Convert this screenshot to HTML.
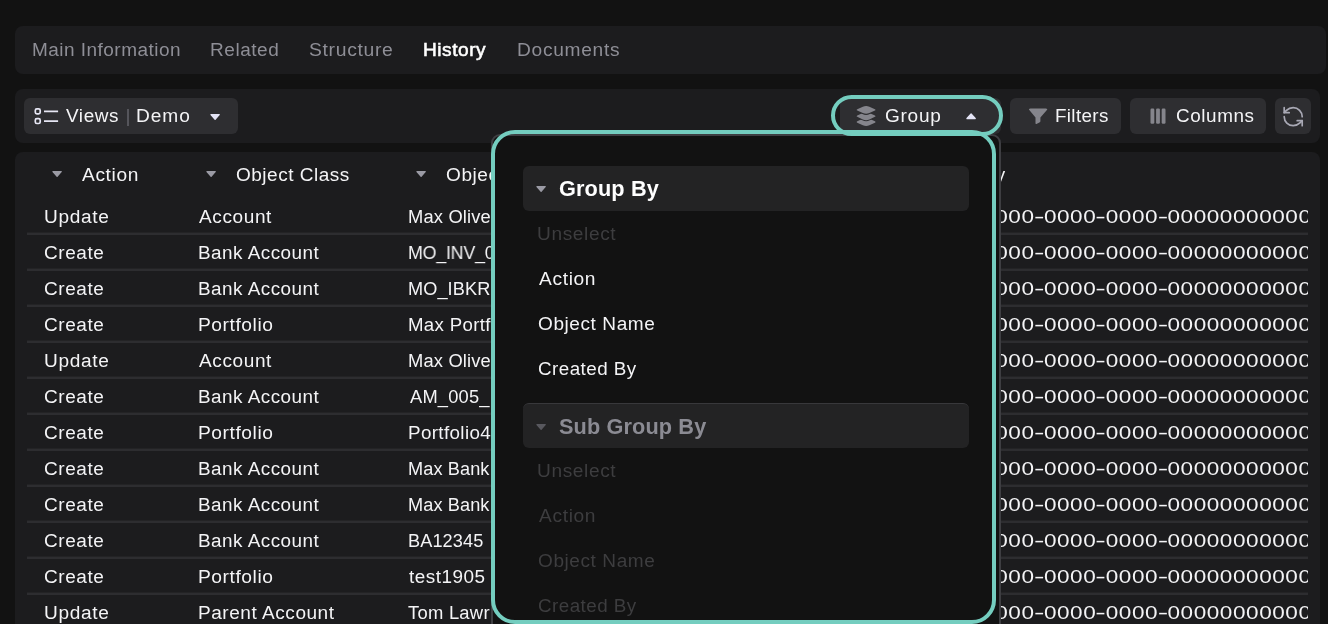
<!DOCTYPE html>
<html lang="en">
<head>
<meta charset="utf-8">
<title>History</title>
<style>
*{box-sizing:border-box;margin:0;padding:0}
html,body{width:1328px;height:624px;overflow:hidden;background:#121212}
body{position:relative;font-family:"Liberation Sans",sans-serif;font-size:18px;color:#f4f4f6}
button{border:0;font:inherit;color:inherit;text-align:left;cursor:pointer;overflow:visible}
a{color:inherit;text-decoration:none;cursor:pointer}
.abs{position:absolute}
.panel{position:absolute;background:#1c1c1e;border-radius:8px}
.btn{position:absolute;background:#2e2e31;border-radius:6px;height:36px;top:9px}
.t{will-change:transform;position:absolute;display:block;white-space:nowrap;line-height:20px;height:20px;transform-origin:0 0}
.clip{position:absolute;left:12px;top:0;width:1281px;height:472px;overflow:hidden}
.tr{position:absolute;left:0;width:1281px;height:36px}
.tr i{position:absolute;left:0;top:34px;width:1281px;height:2px;background:#2d2d30;box-shadow:0 -1px 0 #232325}
.menu{position:absolute;left:491px;top:134px;width:510.2px;height:500px;background:#121212;border:2px solid #3e3e42;border-radius:9px}
.hd{position:absolute;left:30px;width:446px;height:44.5px;background:#232324;border-radius:6px}
.hl{position:absolute;border:4px solid #74cdbf;border-radius:24px;pointer-events:none}
svg{position:absolute;overflow:visible}
</style>
</head>
<body>

<nav class="panel" style="left:15px;top:26px;width:1311px;height:48px">
<a class="t" role="tab" style="left:16.62px;top:14.00px;transform:scaleX(1.0544);letter-spacing:0.452px;color:#8e8e96;">Main Information</a>
<a class="t" role="tab" style="left:195.42px;top:14.00px;transform:scaleX(1.0555);letter-spacing:0.521px;color:#8e8e96;">Related</a>
<a class="t" role="tab" style="left:293.99px;top:14.00px;transform:scaleX(1.0745);letter-spacing:0.619px;color:#8e8e96;">Structure</a>
<a class="t" role="tab" style="left:408.11px;top:14.00px;transform:scaleX(1.0601);letter-spacing:0.515px;color:#ffffff;-webkit-text-stroke:0.55px #ffffff;">History</a>
<a class="t" role="tab" style="left:502.30px;top:14.00px;transform:scaleX(1.0640);letter-spacing:0.670px;color:#8e8e96;">Documents</a>
</nav>
<section class="panel" style="left:15px;top:89px;width:1305px;height:54px">
<button class="btn" style="left:9px;width:214px">
<svg style="left:10.00px;top:9.00px" width="26" height="19" viewBox="34 107 26 19"><g fill="none" stroke="#e6e6f4" stroke-width="1.7"><rect x="35.3" y="108.9" width="4.9" height="4.9" rx="1.6"/><rect x="35.3" y="118.6" width="4.9" height="4.9" rx="1.6"/><path d="M44 111.4H58.1M44 121.15H58.1"/></g></svg>
<span class="t" style="left:42.20px;top:8.00px;transform:scaleX(1.0505);letter-spacing:0.565px;color:#f4f4f6;">Views</span>
<i class="abs" style="left:103.3px;top:10.5px;width:1.3px;height:17.5px;background:#55555b"></i>
<span class="t" style="left:112.21px;top:8.00px;transform:scaleX(1.0628);letter-spacing:0.902px;color:#f4f4f6;">Demo</span>
<svg style="left:186.00px;top:16.00px" width="10.2" height="6.2" viewBox="0 0 10.2 6.2"><polygon points="0.95,0.65 9.25,0.65 5.10,5.25" fill="#e4e4f6" stroke="#e4e4f6" stroke-width="1.3" stroke-linejoin="round"/></svg>
</button>
<button class="btn" style="left:825px;width:161px">
<svg style="left:14.00px;top:6.00px" width="24" height="24" viewBox="854 104 24 24"><path d="M857.26 122.66Q855.80 122.00 857.26 121.34L862.82 118.79Q866.10 117.30 869.38 118.79L874.94 121.34Q876.40 122.00 874.94 122.66L869.38 125.21Q866.10 126.70 862.82 125.21Z" fill="#85858c"/><path d="M857.26 116.86Q855.80 116.20 857.26 115.54L862.82 112.99Q866.10 111.50 869.38 112.99L874.94 115.54Q876.40 116.20 874.94 116.86L869.38 119.41Q866.10 120.90 862.82 119.41Z" fill="#2e2e31" stroke="#2e2e31" stroke-width="2.1" stroke-linejoin="round"/><path d="M857.26 116.86Q855.80 116.20 857.26 115.54L862.82 112.99Q866.10 111.50 869.38 112.99L874.94 115.54Q876.40 116.20 874.94 116.86L869.38 119.41Q866.10 120.90 862.82 119.41Z" fill="#85858c"/><path d="M857.26 110.56Q855.80 109.90 857.26 109.24L862.82 106.69Q866.10 105.20 869.38 106.69L874.94 109.24Q876.40 109.90 874.94 110.56L869.38 113.11Q866.10 114.60 862.82 113.11Z" fill="#2e2e31" stroke="#2e2e31" stroke-width="2.1" stroke-linejoin="round"/><path d="M857.26 110.56Q855.80 109.90 857.26 109.24L862.82 106.69Q866.10 105.20 869.38 106.69L874.94 109.24Q876.40 109.90 874.94 110.56L869.38 113.11Q866.10 114.60 862.82 113.11Z" fill="#85858c"/></svg>
<span class="t" style="left:44.96px;top:8.00px;transform:scaleX(1.0588);letter-spacing:0.673px;color:#f4f4f6;">Group</span>
<svg style="left:125.80px;top:15.30px" width="10.2" height="6.2" viewBox="0 0 10.2 6.2"><polygon points="0.95,5.55 9.25,5.55 5.10,0.95" fill="#e4e4f6" stroke="#e4e4f6" stroke-width="1.3" stroke-linejoin="round"/></svg>
</button>
<button class="btn" style="left:995px;width:111px">
<svg style="left:17.00px;top:9.00px" width="22" height="18" viewBox="1027 107 22 18"><path fill="#85858c" d="M1030.4 108.4H1045.8Q1048.2 108.4 1046.7 110.3L1040.4 117.5V121.3Q1040.4 122 1039.8 122.3L1036.5 123.9Q1035.5 124.3 1035.5 123.3V117.5L1029.5 110.3Q1028 108.4 1030.4 108.4Z"/></svg>
<span class="t" style="left:45.43px;top:8.00px;transform:scaleX(1.0447);letter-spacing:0.335px;color:#f4f4f6;">Filters</span>
</button>
<button class="btn" style="left:1115px;width:136px">
<svg style="left:19.00px;top:9.00px" width="18" height="18" viewBox="1149 107 18 18"><g fill="#85858c"><rect x="1150.5" y="108.5" width="3.8" height="15.3" rx="1.2"/><rect x="1156.1" y="108.5" width="3.8" height="15.3" rx="1.2"/><rect x="1161.7" y="108.5" width="3.8" height="15.3" rx="1.2"/></g></svg>
<span class="t" style="left:45.71px;top:8.00px;transform:scaleX(1.0498);letter-spacing:0.552px;color:#f4f4f6;">Columns</span>
</button>
<button class="btn" title="Refresh" style="left:1260px;width:36px">
<svg style="left:6.00px;top:6.00px" width="26" height="26" viewBox="1281 104 26 26"><g transform="translate(1281.2 104.7)" fill="none" stroke="#a9a9b5" stroke-width="1.7" stroke-linecap="round" stroke-linejoin="round"><path d="M21 12a9 9 0 0 0-9-9 9.75 9.75 0 0 0-6.74 2.74L3 8"/><path d="M3 3v5h5"/><path d="M3 12a9 9 0 0 0 9 9 9.75 9.75 0 0 0 6.740-2.740L21 16"/><path d="M16 16h5v5"/></g></svg>
</button>
</section>
<section class="panel" role="table" style="left:15px;top:152px;width:1305px;height:480px">
<div class="clip">
<div class="tr" role="row" style="top:0;height:47px">
<svg style="left:25.00px;top:19.00px" width="10.2" height="6.2" viewBox="0 0 10.2 6.2"><polygon points="0.95,0.65 9.25,0.65 5.10,5.25" fill="#9a9aa4" stroke="#9a9aa4" stroke-width="1.3" stroke-linejoin="round"/></svg>
<span class="t" role="columnheader" style="left:54.50px;top:13.00px;transform:scaleX(1.0638);letter-spacing:0.588px;color:#f4f4f6;">Action</span>
<svg style="left:179.00px;top:19.00px" width="10.2" height="6.2" viewBox="0 0 10.2 6.2"><polygon points="0.95,0.65 9.25,0.65 5.10,5.25" fill="#9a9aa4" stroke="#9a9aa4" stroke-width="1.3" stroke-linejoin="round"/></svg>
<span class="t" role="columnheader" style="left:208.96px;top:13.00px;transform:scaleX(1.0556);letter-spacing:0.482px;color:#f4f4f6;">Object Class</span>
<svg style="left:389.00px;top:19.00px" width="10.2" height="6.2" viewBox="0 0 10.2 6.2"><polygon points="0.95,0.65 9.25,0.65 5.10,5.25" fill="#9a9aa4" stroke="#9a9aa4" stroke-width="1.3" stroke-linejoin="round"/></svg>
<span class="t" role="columnheader" style="left:418.96px;top:13.00px;transform:scaleX(1.0565);letter-spacing:0.554px;color:#f4f4f6;">Object Name</span>
<svg style="left:850.00px;top:19.00px" width="10.2" height="6.2" viewBox="0 0 10.2 6.2"><polygon points="0.95,0.65 9.25,0.65 5.10,5.25" fill="#9a9aa4" stroke="#9a9aa4" stroke-width="1.3" stroke-linejoin="round"/></svg>
<span class="t" role="columnheader" style="left:879.57px;top:13.00px;transform:scaleX(1.0454);letter-spacing:0.430px;color:#f4f4f6;">Created By</span>
</div>
<div class="tr" role="row" style="top:47px">
<span class="t" role="cell" style="left:16.68px;top:8.00px;transform:scaleX(1.0598);letter-spacing:0.632px;color:#f4f4f6;">Update</span>
<span class="t" role="cell" style="left:172.25px;top:8.00px;transform:scaleX(1.0565);letter-spacing:0.580px;color:#f4f4f6;">Account</span>
<span class="t" role="cell" style="left:381.27px;top:8.00px;transform:scaleX(1.0177);letter-spacing:0.169px;color:#f4f4f6;">Max Olive<span style="margin-left:3px">r</span></span>
<span class="t" role="cell" style="left:840.66px;top:8.00px;transform:scaleX(1.25);letter-spacing:0.47px">00000000<b style="display:inline-block;font-weight:normal;letter-spacing:0;transform:scaleX(1.4);margin:0 0.74px">-</b>0000<b style="display:inline-block;font-weight:normal;letter-spacing:0;transform:scaleX(1.4);margin:0 0.74px">-</b>0000<b style="display:inline-block;font-weight:normal;letter-spacing:0;transform:scaleX(1.4);margin:0 0.74px">-</b>0000<b style="display:inline-block;font-weight:normal;letter-spacing:0;transform:scaleX(1.4);margin:0 0.74px">-</b>000000000000</span>
<i></i></div>
<div class="tr" role="row" style="top:83px">
<span class="t" role="cell" style="left:16.96px;top:8.00px;transform:scaleX(1.0543);letter-spacing:0.541px;color:#f4f4f6;">Create</span>
<span class="t" role="cell" style="left:170.88px;top:8.00px;transform:scaleX(1.0489);letter-spacing:0.464px;color:#f4f4f6;">Bank Account</span>
<span class="t" role="cell" style="left:381.32px;top:8.00px;transform:scaleX(0.9868);letter-spacing:-0.173px;color:#f4f4f6;">MO_INV_001</span>
<span class="t" role="cell" style="left:840.66px;top:8.00px;transform:scaleX(1.25);letter-spacing:0.47px">00000000<b style="display:inline-block;font-weight:normal;letter-spacing:0;transform:scaleX(1.4);margin:0 0.74px">-</b>0000<b style="display:inline-block;font-weight:normal;letter-spacing:0;transform:scaleX(1.4);margin:0 0.74px">-</b>0000<b style="display:inline-block;font-weight:normal;letter-spacing:0;transform:scaleX(1.4);margin:0 0.74px">-</b>0000<b style="display:inline-block;font-weight:normal;letter-spacing:0;transform:scaleX(1.4);margin:0 0.74px">-</b>000000000000</span>
<i></i></div>
<div class="tr" role="row" style="top:119px">
<span class="t" role="cell" style="left:16.96px;top:8.00px;transform:scaleX(1.0543);letter-spacing:0.541px;color:#f4f4f6;">Create</span>
<span class="t" role="cell" style="left:170.88px;top:8.00px;transform:scaleX(1.0489);letter-spacing:0.464px;color:#f4f4f6;">Bank Account</span>
<span class="t" role="cell" style="left:381.29px;top:8.00px;transform:scaleX(1.0076);letter-spacing:0.099px;color:#f4f4f6;">MO_IBKR<span style="margin-left:3px">_01</span></span>
<span class="t" role="cell" style="left:840.66px;top:8.00px;transform:scaleX(1.25);letter-spacing:0.47px">00000000<b style="display:inline-block;font-weight:normal;letter-spacing:0;transform:scaleX(1.4);margin:0 0.74px">-</b>0000<b style="display:inline-block;font-weight:normal;letter-spacing:0;transform:scaleX(1.4);margin:0 0.74px">-</b>0000<b style="display:inline-block;font-weight:normal;letter-spacing:0;transform:scaleX(1.4);margin:0 0.74px">-</b>0000<b style="display:inline-block;font-weight:normal;letter-spacing:0;transform:scaleX(1.4);margin:0 0.74px">-</b>000000000000</span>
<i></i></div>
<div class="tr" role="row" style="top:155px">
<span class="t" role="cell" style="left:16.96px;top:8.00px;transform:scaleX(1.0543);letter-spacing:0.541px;color:#f4f4f6;">Create</span>
<span class="t" role="cell" style="left:170.65px;top:8.00px;transform:scaleX(1.0682);letter-spacing:0.509px;color:#f4f4f6;">Portfolio</span>
<span class="t" role="cell" style="left:381.25px;top:8.00px;transform:scaleX(1.0358);letter-spacing:0.326px;color:#f4f4f6;">Max Portf<span style="margin-left:3px">olio</span></span>
<span class="t" role="cell" style="left:840.66px;top:8.00px;transform:scaleX(1.25);letter-spacing:0.47px">00000000<b style="display:inline-block;font-weight:normal;letter-spacing:0;transform:scaleX(1.4);margin:0 0.74px">-</b>0000<b style="display:inline-block;font-weight:normal;letter-spacing:0;transform:scaleX(1.4);margin:0 0.74px">-</b>0000<b style="display:inline-block;font-weight:normal;letter-spacing:0;transform:scaleX(1.4);margin:0 0.74px">-</b>0000<b style="display:inline-block;font-weight:normal;letter-spacing:0;transform:scaleX(1.4);margin:0 0.74px">-</b>000000000000</span>
<i></i></div>
<div class="tr" role="row" style="top:191px">
<span class="t" role="cell" style="left:16.68px;top:8.00px;transform:scaleX(1.0598);letter-spacing:0.632px;color:#f4f4f6;">Update</span>
<span class="t" role="cell" style="left:172.25px;top:8.00px;transform:scaleX(1.0565);letter-spacing:0.580px;color:#f4f4f6;">Account</span>
<span class="t" role="cell" style="left:381.27px;top:8.00px;transform:scaleX(1.0177);letter-spacing:0.169px;color:#f4f4f6;">Max Olive<span style="margin-left:3px">r</span></span>
<span class="t" role="cell" style="left:840.66px;top:8.00px;transform:scaleX(1.25);letter-spacing:0.47px">00000000<b style="display:inline-block;font-weight:normal;letter-spacing:0;transform:scaleX(1.4);margin:0 0.74px">-</b>0000<b style="display:inline-block;font-weight:normal;letter-spacing:0;transform:scaleX(1.4);margin:0 0.74px">-</b>0000<b style="display:inline-block;font-weight:normal;letter-spacing:0;transform:scaleX(1.4);margin:0 0.74px">-</b>0000<b style="display:inline-block;font-weight:normal;letter-spacing:0;transform:scaleX(1.4);margin:0 0.74px">-</b>000000000000</span>
<i></i></div>
<div class="tr" role="row" style="top:227px">
<span class="t" role="cell" style="left:16.96px;top:8.00px;transform:scaleX(1.0543);letter-spacing:0.541px;color:#f4f4f6;">Create</span>
<span class="t" role="cell" style="left:170.88px;top:8.00px;transform:scaleX(1.0489);letter-spacing:0.464px;color:#f4f4f6;">Bank Account</span>
<span class="t" role="cell" style="left:382.80px;top:8.00px;transform:scaleX(1.0159);letter-spacing:0.201px;color:#f4f4f6;">AM_005_<span style="margin-left:3px">01</span></span>
<span class="t" role="cell" style="left:840.66px;top:8.00px;transform:scaleX(1.25);letter-spacing:0.47px">00000000<b style="display:inline-block;font-weight:normal;letter-spacing:0;transform:scaleX(1.4);margin:0 0.74px">-</b>0000<b style="display:inline-block;font-weight:normal;letter-spacing:0;transform:scaleX(1.4);margin:0 0.74px">-</b>0000<b style="display:inline-block;font-weight:normal;letter-spacing:0;transform:scaleX(1.4);margin:0 0.74px">-</b>0000<b style="display:inline-block;font-weight:normal;letter-spacing:0;transform:scaleX(1.4);margin:0 0.74px">-</b>000000000000</span>
<i></i></div>
<div class="tr" role="row" style="top:263px">
<span class="t" role="cell" style="left:16.96px;top:8.00px;transform:scaleX(1.0543);letter-spacing:0.541px;color:#f4f4f6;">Create</span>
<span class="t" role="cell" style="left:170.65px;top:8.00px;transform:scaleX(1.0682);letter-spacing:0.509px;color:#f4f4f6;">Portfolio</span>
<span class="t" role="cell" style="left:381.23px;top:8.00px;transform:scaleX(1.0446);letter-spacing:0.351px;color:#f4f4f6;">Portfolio4</span>
<span class="t" role="cell" style="left:840.66px;top:8.00px;transform:scaleX(1.25);letter-spacing:0.47px">00000000<b style="display:inline-block;font-weight:normal;letter-spacing:0;transform:scaleX(1.4);margin:0 0.74px">-</b>0000<b style="display:inline-block;font-weight:normal;letter-spacing:0;transform:scaleX(1.4);margin:0 0.74px">-</b>0000<b style="display:inline-block;font-weight:normal;letter-spacing:0;transform:scaleX(1.4);margin:0 0.74px">-</b>0000<b style="display:inline-block;font-weight:normal;letter-spacing:0;transform:scaleX(1.4);margin:0 0.74px">-</b>000000000000</span>
<i></i></div>
<div class="tr" role="row" style="top:299px">
<span class="t" role="cell" style="left:16.96px;top:8.00px;transform:scaleX(1.0543);letter-spacing:0.541px;color:#f4f4f6;">Create</span>
<span class="t" role="cell" style="left:170.88px;top:8.00px;transform:scaleX(1.0489);letter-spacing:0.464px;color:#f4f4f6;">Bank Account</span>
<span class="t" role="cell" style="left:381.29px;top:8.00px;transform:scaleX(1.0089);letter-spacing:0.099px;color:#f4f4f6;">Max Bank<span style="margin-left:3px"> 1</span></span>
<span class="t" role="cell" style="left:840.66px;top:8.00px;transform:scaleX(1.25);letter-spacing:0.47px">00000000<b style="display:inline-block;font-weight:normal;letter-spacing:0;transform:scaleX(1.4);margin:0 0.74px">-</b>0000<b style="display:inline-block;font-weight:normal;letter-spacing:0;transform:scaleX(1.4);margin:0 0.74px">-</b>0000<b style="display:inline-block;font-weight:normal;letter-spacing:0;transform:scaleX(1.4);margin:0 0.74px">-</b>0000<b style="display:inline-block;font-weight:normal;letter-spacing:0;transform:scaleX(1.4);margin:0 0.74px">-</b>000000000000</span>
<i></i></div>
<div class="tr" role="row" style="top:335px">
<span class="t" role="cell" style="left:16.96px;top:8.00px;transform:scaleX(1.0543);letter-spacing:0.541px;color:#f4f4f6;">Create</span>
<span class="t" role="cell" style="left:170.88px;top:8.00px;transform:scaleX(1.0489);letter-spacing:0.464px;color:#f4f4f6;">Bank Account</span>
<span class="t" role="cell" style="left:381.29px;top:8.00px;transform:scaleX(1.0089);letter-spacing:0.099px;color:#f4f4f6;">Max Bank<span style="margin-left:3px"> 2</span></span>
<span class="t" role="cell" style="left:840.66px;top:8.00px;transform:scaleX(1.25);letter-spacing:0.47px">00000000<b style="display:inline-block;font-weight:normal;letter-spacing:0;transform:scaleX(1.4);margin:0 0.74px">-</b>0000<b style="display:inline-block;font-weight:normal;letter-spacing:0;transform:scaleX(1.4);margin:0 0.74px">-</b>0000<b style="display:inline-block;font-weight:normal;letter-spacing:0;transform:scaleX(1.4);margin:0 0.74px">-</b>0000<b style="display:inline-block;font-weight:normal;letter-spacing:0;transform:scaleX(1.4);margin:0 0.74px">-</b>000000000000</span>
<i></i></div>
<div class="tr" role="row" style="top:371px">
<span class="t" role="cell" style="left:16.96px;top:8.00px;transform:scaleX(1.0543);letter-spacing:0.541px;color:#f4f4f6;">Create</span>
<span class="t" role="cell" style="left:170.88px;top:8.00px;transform:scaleX(1.0489);letter-spacing:0.464px;color:#f4f4f6;">Bank Account</span>
<span class="t" role="cell" style="left:381.24px;top:8.00px;transform:scaleX(1.0084);letter-spacing:0.099px;color:#f4f4f6;">BA12345</span>
<span class="t" role="cell" style="left:840.66px;top:8.00px;transform:scaleX(1.25);letter-spacing:0.47px">00000000<b style="display:inline-block;font-weight:normal;letter-spacing:0;transform:scaleX(1.4);margin:0 0.74px">-</b>0000<b style="display:inline-block;font-weight:normal;letter-spacing:0;transform:scaleX(1.4);margin:0 0.74px">-</b>0000<b style="display:inline-block;font-weight:normal;letter-spacing:0;transform:scaleX(1.4);margin:0 0.74px">-</b>0000<b style="display:inline-block;font-weight:normal;letter-spacing:0;transform:scaleX(1.4);margin:0 0.74px">-</b>000000000000</span>
<i></i></div>
<div class="tr" role="row" style="top:407px">
<span class="t" role="cell" style="left:16.96px;top:8.00px;transform:scaleX(1.0543);letter-spacing:0.541px;color:#f4f4f6;">Create</span>
<span class="t" role="cell" style="left:170.65px;top:8.00px;transform:scaleX(1.0682);letter-spacing:0.509px;color:#f4f4f6;">Portfolio</span>
<span class="t" role="cell" style="left:382.49px;top:8.00px;transform:scaleX(1.0511);letter-spacing:0.472px;color:#f4f4f6;">test1905</span>
<span class="t" role="cell" style="left:840.66px;top:8.00px;transform:scaleX(1.25);letter-spacing:0.47px">00000000<b style="display:inline-block;font-weight:normal;letter-spacing:0;transform:scaleX(1.4);margin:0 0.74px">-</b>0000<b style="display:inline-block;font-weight:normal;letter-spacing:0;transform:scaleX(1.4);margin:0 0.74px">-</b>0000<b style="display:inline-block;font-weight:normal;letter-spacing:0;transform:scaleX(1.4);margin:0 0.74px">-</b>0000<b style="display:inline-block;font-weight:normal;letter-spacing:0;transform:scaleX(1.4);margin:0 0.74px">-</b>000000000000</span>
<i></i></div>
<div class="tr" role="row" style="top:443px">
<span class="t" role="cell" style="left:16.68px;top:8.00px;transform:scaleX(1.0598);letter-spacing:0.632px;color:#f4f4f6;">Update</span>
<span class="t" role="cell" style="left:170.86px;top:8.00px;transform:scaleX(1.0572);letter-spacing:0.506px;color:#f4f4f6;">Parent Account</span>
<span class="t" role="cell" style="left:381.44px;top:8.00px;transform:scaleX(1.0226);letter-spacing:0.244px;color:#f4f4f6;">Tom Lawr<span style="margin-left:3px">ence</span></span>
<span class="t" role="cell" style="left:840.66px;top:8.00px;transform:scaleX(1.25);letter-spacing:0.47px">00000000<b style="display:inline-block;font-weight:normal;letter-spacing:0;transform:scaleX(1.4);margin:0 0.74px">-</b>0000<b style="display:inline-block;font-weight:normal;letter-spacing:0;transform:scaleX(1.4);margin:0 0.74px">-</b>0000<b style="display:inline-block;font-weight:normal;letter-spacing:0;transform:scaleX(1.4);margin:0 0.74px">-</b>0000<b style="display:inline-block;font-weight:normal;letter-spacing:0;transform:scaleX(1.4);margin:0 0.74px">-</b>000000000000</span>
<i></i></div>
</div>
</section>
<div class="menu" role="menu">
<div class="hd" style="top:30.2px"></div>
<svg style="left:43.00px;top:50.00px" width="10.2" height="6.2" viewBox="0 0 10.2 6.2"><polygon points="0.95,0.65 9.25,0.65 5.10,5.25" fill="#9a9aa4" stroke="#9a9aa4" stroke-width="1.3" stroke-linejoin="round"/></svg>
<div class="t" style="left:66.49px;top:40.75px;transform:scaleX(1.0095);letter-spacing:0.131px;color:#ffffff;font-size:21.5px;line-height:24px;height:24px;font-weight:bold;">Group By</div>
<div class="t" role="menuitem" style="left:44.37px;top:88.00px;transform:scaleX(1.0618);letter-spacing:0.572px;color:#3d3d3f;">Unselect</div>
<div class="t" role="menuitem" style="left:45.75px;top:133.00px;transform:scaleX(1.0658);letter-spacing:0.605px;color:#f4f4f6;">Action</div>
<div class="t" role="menuitem" style="left:45.46px;top:178.00px;transform:scaleX(1.0565);letter-spacing:0.554px;color:#f4f4f6;">Object Name</div>
<div class="t" role="menuitem" style="left:45.47px;top:223.00px;transform:scaleX(1.0454);letter-spacing:0.430px;color:#f4f4f6;">Created By</div>
<div class="hd" style="top:266.8px;height:45px;border-top:1.2px solid #38383b"></div>
<svg style="left:43.00px;top:288.00px" width="10.2" height="6.2" viewBox="0 0 10.2 6.2"><polygon points="0.95,0.65 9.25,0.65 5.10,5.25" fill="#58585e" stroke="#58585e" stroke-width="1.3" stroke-linejoin="round"/></svg>
<div class="t" style="left:66.49px;top:278.65px;transform:scaleX(1.0094);letter-spacing:0.122px;color:#8b8b93;font-size:21.5px;line-height:24px;height:24px;font-weight:bold;">Sub Group By</div>
<div class="t" role="menuitem" style="left:44.37px;top:325.00px;transform:scaleX(1.0618);letter-spacing:0.572px;color:#3d3d3f;">Unselect</div>
<div class="t" role="menuitem" style="left:45.75px;top:370.00px;transform:scaleX(1.0658);letter-spacing:0.605px;color:#3d3d3f;">Action</div>
<div class="t" role="menuitem" style="left:45.46px;top:415.00px;transform:scaleX(1.0565);letter-spacing:0.554px;color:#3d3d3f;">Object Name</div>
<div class="t" role="menuitem" style="left:45.47px;top:460.00px;transform:scaleX(1.0454);letter-spacing:0.430px;color:#3d3d3f;">Created By</div>
</div>
<div class="hl" style="left:491px;top:130px;width:505.3px;height:494px"></div>
<div class="hl" style="left:831px;top:95px;width:171.8px;height:40.8px"></div>
</body>
</html>
